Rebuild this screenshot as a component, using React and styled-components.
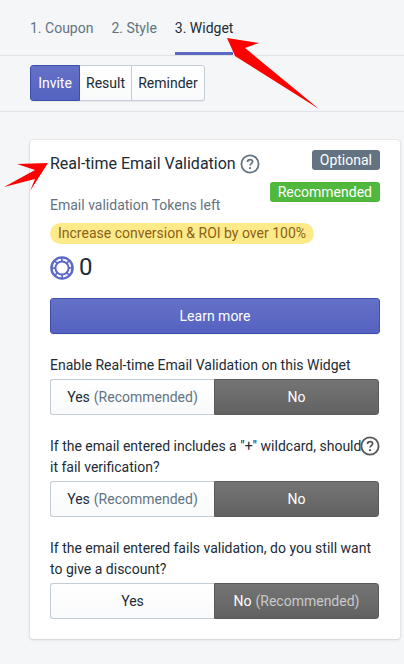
import React from "react";
import styled, { createGlobalStyle } from "styled-components";

const Global = createGlobalStyle`
  html, body { margin: 0; padding: 0; background: #f4f6f8; }
  body { font-family: Roboto, "Open Sans", "Liberation Sans", sans-serif; font-size: 14px; color: #212b36; }
  * { box-sizing: border-box; }
`;
const Page = styled.div`
  position: relative;
  width: 404px;
  height: 664px;
  overflow: hidden;
  background: #f4f6f8;
`;
const Tabs = styled.nav`
  display: flex;
  height: 56px;
  padding-left: 30px;
  gap: 18px;
  border-bottom: 1px solid #dfe3e8;
`;
const Tab = styled.div`
  height: 55px;
  padding-top: 19px;
  line-height: 18px;
  font-size: 14px;
  white-space: nowrap;
  color: ${p => (p.$active ? "#212b36" : "#637381")};
  border-bottom: 3px solid ${p => (p.$active ? "#5c6ac4" : "transparent")};
`;
const SubBar = styled.div`
  height: 56px;
  padding: 9px 0 0 30px;
  border-bottom: 1px solid #dfe3e8;
`;
const Group = styled.div`
  display: inline-flex;
  height: 36px;
`;
const GroupBtn = styled.div`
  display: flex;
  align-items: center;
  justify-content: center;
  width: ${p => p.$w}px;
  margin-left: ${p => (p.$first ? 0 : -1)}px;
  font-size: 14px;
  border: 1px solid ${p => (p.$active ? "#3f4eae" : "#c4cdd5")};
  border-radius: ${p => (p.$first ? "3px 0 0 3px" : p.$last ? "0 3px 3px 0" : "0")};
  background: ${p => (p.$active ? "linear-gradient(#6371c7, #5563c1)" : "linear-gradient(#fff, #f9fafb)")};
  color: ${p => (p.$active ? "#fff" : "#212b36")};
  box-shadow: 0 1px 0 rgba(22, 29, 37, 0.05);
  position: relative;
  z-index: ${p => (p.$active ? 1 : 0)};
`;
const Card = styled.section`
  margin: 28px 4px 0 30px;
  height: 499px;
  padding: 10px 20px 0;
  background: #fff;
  border-radius: 3px;
  box-shadow: 0 0 0 1px rgba(63, 63, 68, 0.05), 0 1px 3px 0 rgba(63, 63, 68, 0.15);
`;
const Header = styled.div`
  display: flex;
  justify-content: space-between;
`;
const HeadLeft = styled.div`
  display: flex;
  flex-direction: column;
`;
const Title = styled.h2`
  display: flex;
  align-items: center;
  margin: 0;
  padding-top: 2px;
  height: 26px;
  font-size: 16px;
  font-weight: 400;
  line-height: 24px;
  color: #212b36;
  gap: 4px;
`;
const Sub = styled.div`
  margin-top: 19px;
  line-height: 20px;
  font-size: 14px;
  color: #637381;
`;
const Badges = styled.div`
  display: flex;
  flex-direction: column;
  align-items: flex-end;
  gap: 12px;
`;
const Badge = styled.span`
  display: block;
  height: 20px;
  line-height: 20px;
  padding: 0 8px;
  font-size: 14px;
  border-radius: 3px;
  color: #fff;
  background: ${p => p.$bg};
`;
const Pill = styled.div`
  display: inline-block;
  margin-top: 8px;
  height: 21px;
  line-height: 21px;
  padding: 0 8px;
  font-size: 14px;
  white-space: nowrap;
  border-radius: 11px;
  background: #ffea8a;
  color: #8a6116;
`;
const Tokens = styled.div`
  display: flex;
  align-items: center;
  gap: 5px;
  margin-top: 11px;
  height: 25px;
  font-size: 24px;
  line-height: 25px;
  color: #212b36;
`;
const Primary = styled.div`
  display: flex;
  align-items: center;
  justify-content: center;
  margin-top: 18px;
  height: 36px;
  font-size: 14px;
  color: #fff;
  border: 1px solid #3f4eae;
  border-radius: 3px;
  background: linear-gradient(#6371c7, #5563c1);
  box-shadow: 0 1px 0 rgba(22, 29, 37, 0.05);
`;
const Question = styled.div`
  position: relative;
  margin-top: ${p => p.$mt}px;
  font-size: 14px;
  line-height: 21px;
  white-space: nowrap;
  color: #212b36;
`;
const Toggle = styled.div`
  display: flex;
  width: 329px;
  height: 36px;
  margin-top: ${p => p.$mt || 3}px;
`;
const Side = styled.div`
  display: flex;
  align-items: center;
  justify-content: center;
  width: ${p => (p.$on ? 165 : 164)}px;
  font-size: 14px;
  gap: 4px;
  white-space: nowrap;
  color: ${p => (p.$on ? "#fff" : "#212b36")};
  background: ${p => (p.$on ? "linear-gradient(#747474, #626262)" : "linear-gradient(#fff, #f9fafb)")};
  border: 1px solid ${p => (p.$on ? "#5a5a5a" : "#c4cdd5")};
  border-right-width: ${p => (p.$on ? 1 : 0)}px;
  border-radius: ${p => (p.$on ? "0 3px 3px 0" : "3px 0 0 3px")};
`;
const Hint = styled.span`
  color: ${p => (p.$on ? "#c9c9c9" : "#637381")};
`;
const HelpSpot = styled.span`
  position: absolute;
  right: 0;
  top: 0;
  display: flex;
`;
const Arrow = styled.svg`
  position: absolute;
  left: 0;
  top: 0;
  pointer-events: none;
`;

const Help = ({ color = "#637381" }) => (
  <svg width="20" height="20" viewBox="0 0 20 20" fill="none">
    <circle cx="10" cy="10" r="8.6" stroke={color} strokeWidth="1.8" />
    <path d="M7.5 8c0-1.5 1.1-2.4 2.6-2.4s2.5.9 2.5 2.1c0 1.9-2.6 1.9-2.6 3.8" stroke={color} strokeWidth="1.7" fill="none" />
    <circle cx="10" cy="14.2" r="1.1" fill={color} />
  </svg>
);
const TokenIcon = () => (
  <svg width="24" height="24" viewBox="0 0 24 24" fill="none">
    <circle cx="12" cy="12" r="10.6" stroke="#5c6ac4" strokeWidth="2.4" />
    <circle cx="12" cy="12" r="6.6" stroke="#5c6ac4" strokeWidth="2" />
    <g stroke="#5c6ac4" strokeWidth="2">
      <path d="M12 2v4M12 18v4M2 12h4M18 12h4M5 5l2.8 2.8M16.2 16.2 19 19M19 5l-2.8 2.8M7.8 16.2 5 19" />
    </g>
    <circle cx="12" cy="12" r="8.6" stroke="#c9cef0" strokeWidth="0.8" strokeDasharray="3 3.7" />
  </svg>
);

const YesNo = ({ mt, yesHint, noHint }) => (
  <Toggle $mt={mt}>
    <Side>Yes{yesHint && <Hint>(Recommended)</Hint>}</Side>
    <Side $on>No{noHint && <Hint $on>(Recommended)</Hint>}</Side>
  </Toggle>
);

export default function App() {
  return (
    <Page>
      <Global />
      <Tabs>
        <Tab>1. Coupon</Tab>
        <Tab>2. Style</Tab>
        <Tab $active>3. Widget</Tab>
      </Tabs>
      <SubBar>
        <Group>
          <GroupBtn $first $active $w={50}>Invite</GroupBtn>
          <GroupBtn $w={53}>Result</GroupBtn>
          <GroupBtn $last $w={74}>Reminder</GroupBtn>
        </Group>
      </SubBar>
      <Card>
        <Header>
          <HeadLeft>
            <Title>Real-time Email Validation <Help /></Title>
            <Sub>Email validation Tokens left</Sub>
          </HeadLeft>
          <Badges>
            <Badge $bg="#637381">Optional</Badge>
            <Badge $bg="#50b83c">Recommended</Badge>
          </Badges>
        </Header>
        <Pill>Increase conversion &amp; ROI by over 100%</Pill>
        <Tokens><TokenIcon />0</Tokens>
        <Primary>Learn more</Primary>
        <Question $mt={21}>Enable Real-time Email Validation on this Widget</Question>
        <YesNo yesHint />
        <Question $mt={21}>
          If the email entered includes a "+" wildcard, should<br />it fail verification?
          <HelpSpot><Help color="#555" /></HelpSpot>
        </Question>
        <YesNo yesHint />
        <Question $mt={21}>
          If the email entered fails validation, do you still want<br />to give a discount?
        </Question>
        <YesNo noHint />
      </Card>
      <Arrow width="404" height="664" viewBox="0 0 404 664">
        <polygon fill="#fe0000" points="227,38 259,43 245,48 319,109 235,56 240,67" />
        <polygon fill="#fe0000" points="48,163 17,164 35,170 4,187 35,179 30,191" />
      </Arrow>
    </Page>
  );
}
